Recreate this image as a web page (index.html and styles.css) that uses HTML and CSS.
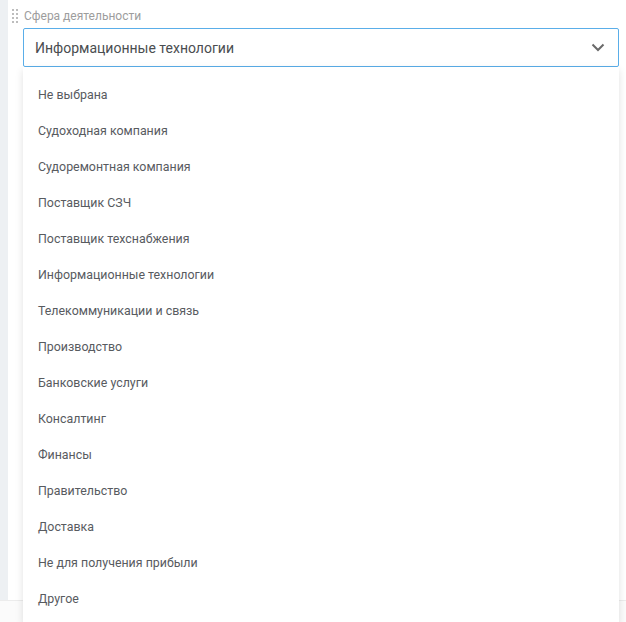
FILE: index.html
```html
<!DOCTYPE html>
<html lang="ru">
<head>
<meta charset="utf-8">
<link rel="stylesheet" href="styles.css">
</head>
<body>
<div class="panel">
  <div class="field">
    <div class="label-row">
      <span class="handle">
        <i></i><i></i><i></i><i></i><i></i><i></i><i></i><i></i>
      </span>
      <span class="label">Сфера деятельности</span>
    </div>
    <div class="select-wrap">
      <div class="select">
        <span class="value">Информационные технологии</span>
        <svg class="chev" width="14" height="9" viewBox="0 0 14 9"><path d="M1.5 1.5 L7 7 L12.5 1.5" fill="none" stroke="#6a6a6a" stroke-width="2"/></svg>
      </div>
      <ul class="menu">
        <li>Не выбрана</li>
        <li>Судоходная компания</li>
        <li>Судоремонтная компания</li>
        <li>Поставщик СЗЧ</li>
        <li>Поставщик техснабжения</li>
        <li>Информационные технологии</li>
        <li>Телекоммуникации и связь</li>
        <li>Производство</li>
        <li>Банковские услуги</li>
        <li>Консалтинг</li>
        <li>Финансы</li>
        <li>Правительство</li>
        <li>Доставка</li>
        <li>Не для получения прибыли</li>
        <li>Другое</li>
      </ul>
    </div>
  </div>
</div>
<div class="footer"></div>
</body>
</html>
```
FILE: styles.css
```css
html, body {
  margin: 0;
  padding: 0;
  overflow: hidden;
}
body {
  width: 626px;
  height: 622px;
  background: #edf0f3;
  font-family: Roboto, "Liberation Sans", sans-serif;
}
.panel {
  margin-left: 8px;
  height: 600px;
  background: #ffffff;
  box-sizing: border-box;
  padding: 7px 7px 0 4px;
}
.footer {
  height: 22px;
  background: #fbfbfb;
  border-top: 1px solid #ececec;
  box-sizing: border-box;
}
.label-row {
  display: flex;
  align-items: center;
  height: 17px;
}
.handle {
  display: grid;
  grid-template-columns: 2px 2px;
  grid-auto-rows: 2px;
  column-gap: 2px;
  row-gap: 2px;
  width: 6px;
  margin-right: 6px;
  margin-top: 1px;
}
.handle i {
  display: block;
  width: 2px;
  height: 2px;
  background: #bdbdbd;
}
.label {
  font-size: 12px;
  color: #9d9d9d;
}
.select-wrap {
  position: relative;
  margin: 4px 0 0 11px;
}
.select {
  height: 39px;
  box-sizing: border-box;
  border: 1px solid #5aaee9;
  border-radius: 2px;
  display: flex;
  align-items: center;
  justify-content: space-between;
  padding: 0 13px 0 11px;
  background: #fff;
}
.value {
  font-size: 14px;
  color: #4a4d50;
}
.chev {
  display: block;
}
.menu {
  position: absolute;
  left: 0;
  right: 0;
  top: 39px;
  margin: 0;
  padding: 10px 0 0;
  list-style: none;
  background: #fff;
  box-shadow: 0 3px 8px rgba(0, 0, 0, 0.12);
  height: 546px;
  overflow: hidden;
}
.menu li {
  height: 36px;
  line-height: 36px;
  padding-left: 15px;
  font-size: 12.4px;
  color: #585b5f;
}
```
